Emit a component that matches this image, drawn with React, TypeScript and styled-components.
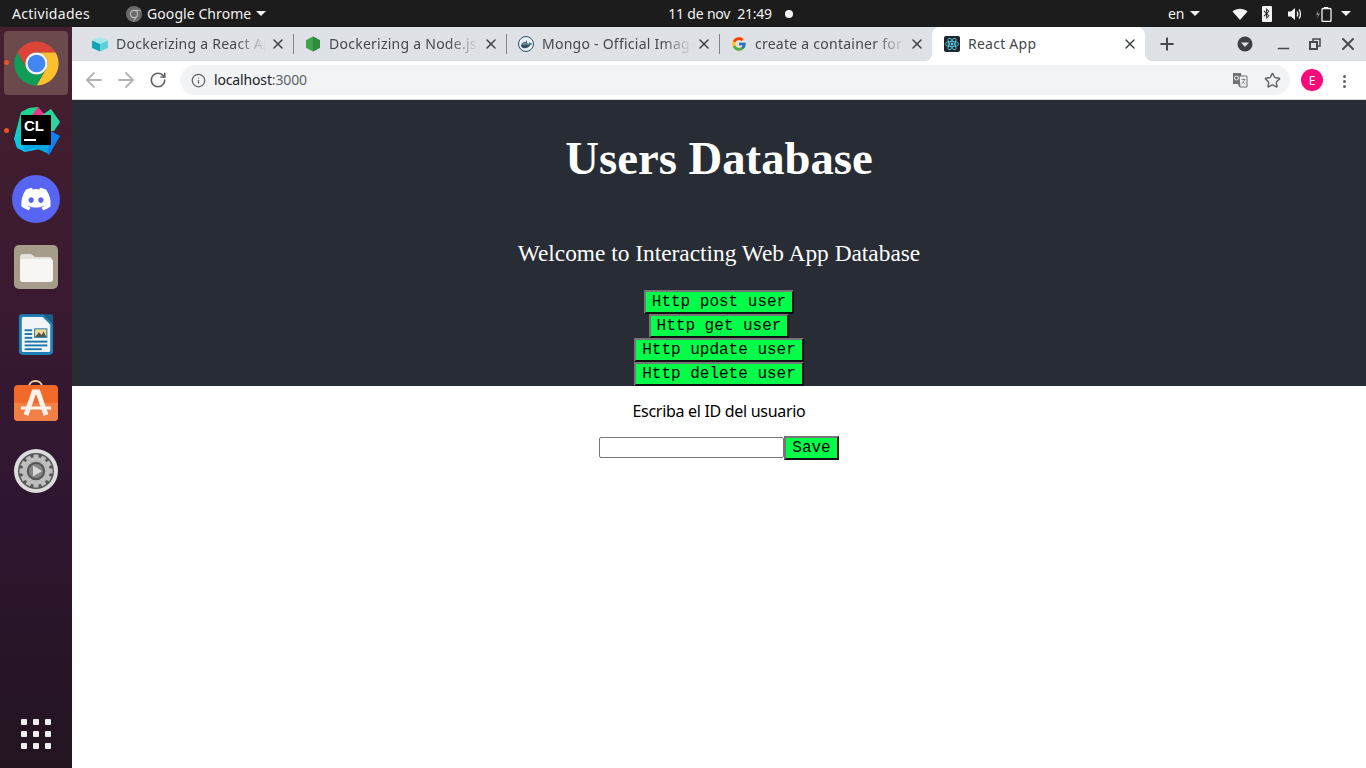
import React from 'react';
import styled, { createGlobalStyle } from 'styled-components';
import { FaDiscord, FaDocker, FaBluetoothB } from 'react-icons/fa';
import { FcGoogle } from 'react-icons/fc';
import { ArrowLeft, ArrowRight, RotateCw, Info, Star, Plus, X, Minus } from 'lucide-react';

const UI = `"Noto Sans", "Open Sans", sans-serif`;

const Global = createGlobalStyle`
  html, body { margin: 0; padding: 0; width: 1366px; height: 768px; overflow: hidden; background: #fff; }
  * { box-sizing: border-box; }
  svg { flex-shrink: 0; }
`;

const Desktop = styled.div`
  width: 1366px; height: 768px; display: flex; flex-direction: column;
  font-family: ${UI};
`;

/* ---------- GNOME top bar ---------- */
const TopBar = styled.header`
  height: 27px; flex: none; background: #1c1c1c; color: #f2f2f2;
  display: flex; align-items: center; font-size: 14px; padding-left: 12px; white-space: nowrap;
`;
const BarText = styled.span<{ $left?: number; $spacing?: number }>`
  margin-left: ${p => p.$left ?? 0}px; letter-spacing: ${p => p.$spacing ?? 0.3}px; line-height: 27px;
`;
const BarSlot = styled.span<{ $left: number; $width?: number }>`
  margin-left: ${p => p.$left}px; display: inline-flex; align-items: center; justify-content: center;
  width: ${p => p.$width ?? 16}px; height: 16px;
`;
const Caret = styled.span<{ $left: number }>`
  margin-left: ${p => p.$left}px; width: 0; height: 0;
  border-left: 5px solid transparent; border-right: 5px solid transparent; border-top: 5px solid #f2f2f2;
`;
const ClockDot = styled.span<{ $left: number }>`
  margin-left: ${p => p.$left}px; width: 8px; height: 8px; border-radius: 50%; background: #f2f2f2;
`;

/* ---------- Layout ---------- */
const Body = styled.div`
  flex: 1; display: flex; min-height: 0;
`;
const Dock = styled.nav`
  width: 72px; flex: none; display: flex; flex-direction: column; align-items: center;
  padding-top: 2px; padding-bottom: 19px;
  background: linear-gradient(180deg, #45202e 0%, #3a1a30 35%, #2e1630 65%, #231420 100%);
`;
const DockItem = styled.div<{ $active?: boolean }>`
  position: relative; width: 64px; height: 64px; margin: 2px 0; flex: none; border-radius: 4px;
  display: flex; align-items: center; justify-content: center;
  background: ${p => (p.$active ? '#6b4a4e' : 'transparent')};
`;
const RunDot = styled.span`
  position: absolute; left: 0; top: 29px; width: 5px; height: 5px; border-radius: 50%; background: #e95420;
`;
const AppGrid = styled.div`
  margin-top: auto; display: grid; grid-template-columns: repeat(3, 6px); gap: 6px;
`;
const AppDot = styled.span`
  width: 6px; height: 6px; border-radius: 1px; background: #eeeeee;
`;
const Discord = styled.div`
  width: 48px; height: 48px; border-radius: 50%; background: #5865f2; color: #fff;
  display: flex; align-items: center; justify-content: center;
`;

/* ---------- Browser ---------- */
const Browser = styled.main`
  flex: 1; min-width: 0; display: flex; flex-direction: column;
`;
const TabStrip = styled.div`
  height: 34px; flex: none; background: #dee1e6; display: flex; padding-left: 8px; align-items: stretch;
`;
const Tab = styled.div<{ $divider?: boolean }>`
  position: relative; width: 213px; flex: none; display: flex; align-items: center; padding: 0 0 0 12px;
  color: #45484d; font-size: 14px;
  &::after {
    content: ''; display: ${p => (p.$divider ? 'block' : 'none')};
    position: absolute; right: -1px; top: 7px; width: 1px; height: 20px; background: #81868a;
  }
`;
const ActiveTab = styled(Tab)`
  background: #fff; border-radius: 8px 8px 0 0;
  &::before, &::after {
    content: ''; display: block; position: absolute; top: auto; bottom: 0; width: 8px; height: 8px; background: none;
  }
  &::before { left: -8px; background: radial-gradient(circle at 0 0, transparent 8px, #fff 8.5px); }
  &::after { right: -8px; background: radial-gradient(circle at 100% 0, transparent 8px, #fff 8.5px); }
`;
const Favicon = styled.span<{ $push?: boolean }>`
  width: 16px; height: 16px; flex: none; display: flex; align-items: center; justify-content: center;
  margin-left: ${p => (p.$push ? 'auto' : '0')};
`;
const TabTitle = styled.span<{ $fade?: boolean }>`
  margin-left: 8px; width: 150px; overflow: hidden; white-space: nowrap; line-height: 20px; margin-top: -1px;
  letter-spacing: 0.25px;
  ${p => (p.$fade ? 'mask-image: linear-gradient(90deg, #000 80%, transparent 100%);' : '')}
`;
const TabClose = styled.span`
  margin-left: 4px; width: 16px; height: 16px; flex: none; display: flex; align-items: center; justify-content: center; color: #3c4043;
`;
const StripIcon = styled.span<{ $left: number; $drop?: number }>`
  margin-left: ${p => p.$left}px; margin-top: ${p => (p.$drop ?? 0) * 2}px;
  width: 16px; height: 16px; flex: none; display: flex; align-items: center; justify-content: center; color: #45484d;
  align-self: center;
`;
const MongoFav = styled.span`
  width: 16px; height: 16px; border-radius: 50%; border: 1.5px solid #2b5468; background: #e8eef1; color: #2b5468;
  display: flex; align-items: center; justify-content: center;
`;
const Toolbar = styled.div`
  height: 38px; flex: none; background: #fff; display: flex; align-items: flex-start; padding: 4px 0 0 14px;
`;
const NavButton = styled.span<{ $color: string; $left?: number }>`
  margin-left: ${p => p.$left ?? 0}px; width: 16px; height: 30px; flex: none; display: flex; align-items: center; justify-content: center;
  color: ${p => p.$color};
`;
const UrlPill = styled.div`
  margin-left: 14px; width: 1110px; height: 30px; border-radius: 15px; background: #f1f3f4;
  display: flex; align-items: center; padding-left: 11px; padding-right: 10px; font-size: 14px; color: #202124;
`;
const Host = styled.span`
  margin-left: 8px; line-height: 20px; margin-top: -1px; letter-spacing: -0.15px;
`;
const Port = styled.span`
  color: #5f6368;
`;
const Avatar = styled.span`
  margin-left: 11px; width: 22px; height: 22px; margin-top: 4px; border-radius: 50%; background: #fb0a7a; color: #fff; flex: none;
  display: flex; align-items: center; justify-content: center; font-size: 12px;
`;
const Kebab = styled.span`
  margin-left: 20px; margin-top: 10px; display: flex; flex-direction: column; gap: 2px; flex: none;
`;
const KebabDot = styled.span`
  width: 3px; height: 3px; border-radius: 50%; background: #5f6368;
`;
const Divider = styled.div`
  height: 1px; flex: none; background: #d5d7da;
`;

/* ---------- The React page ---------- */
const Page = styled.div`
  flex: 1; background: #fff; display: flex; flex-direction: column; align-items: center;
`;
const Hero = styled.section`
  width: 100%; height: 286px; flex: none; background: #282c34; color: #fff;
  display: flex; flex-direction: column; align-items: center; overflow: hidden;
  font-family: "Liberation Serif", "Times New Roman", serif;
`;
const Title = styled.h1`
  margin: 31px 0 0; font-size: 46.72px; line-height: 55px; font-weight: 700;
`;
const Welcome = styled.p`
  margin: 53px 0 0; font-size: 23.36px; line-height: 28px; font-weight: 400;
`;
const Actions = styled.div`
  margin-top: 23px; display: flex; flex-direction: column; align-items: center;
`;
const ActionButton = styled.button`
  height: 24px; padding: 0 6px; margin: 0; border-width: 2px; border-style: solid;
  border-color: #767676 #111 #111 #767676; background: #00ff48; color: #000;
  font-family: "Liberation Mono", "Courier New", monospace; font-size: 16px; line-height: 18px;
`;
const Prompt = styled.p`
  margin: 15px 0 0; font-size: 16px; line-height: 20px; color: #000; font-family: ${UI};
  letter-spacing: -0.3px;
`;
const Form = styled.div`
  margin-top: 15px; display: flex; align-items: flex-start; height: 24px;
`;
const IdInput = styled.input`
  width: 185px; height: 21px; margin-top: 1px; padding: 1px 2px; border: 1px solid #767676; border-radius: 2px; background: #fff; outline: none;
`;

/* ---------- Drawn icons ---------- */
const ChromeLogo = ({ size }: { size: number }) => (
  <svg width={size} height={size} viewBox="0 0 48 48">
    <path d="M6.68 14A20 20 0 0 1 41.32 14H24A10 10 0 0 0 15.34 29Z" fill="#db4437" />
    <path d="M41.32 14A20 20 0 0 1 24 44L32.66 29A10 10 0 0 0 24 14Z" fill="#fbc02d" />
    <path d="M24 44A20 20 0 0 1 6.68 14L15.34 29A10 10 0 0 0 32.66 29Z" fill="#0f9d58" />
    <circle cx="24" cy="24" r="10" fill="#f5f5f5" />
    <circle cx="24" cy="24" r="8" fill="#4285f4" />
  </svg>
);
const CLionLogo = () => (
  <svg width="50" height="50" viewBox="0 0 50 50">
    <defs>
      <linearGradient id="clLeft" x1="0" y1="0" x2="0" y2="1">
        <stop offset="0" stopColor="#21d789" />
        <stop offset="1" stopColor="#07c3f2" />
      </linearGradient>
    </defs>
    <path d="M3 33L10 6 18 2 27 1 33 10V42L14 46 6 42Z" fill="url(#clLeft)" />
    <path d="M21 9L27 1 34 9Z" fill="#ed358c" />
    <path d="M31 9L40 3 49 16 43 25 38 25Z" fill="#2bd6a0" />
    <path d="M38 24L49 30 38 49 30 42 38 36Z" fill="#0a84f0" />
    <path d="M12 39H38L36 47 24 42 14 45Z" fill="#0aa6e6" />
    <rect x="10" y="9" width="30" height="30" fill="#000" />
    <text x="13" y="25" fill="#fff" fontFamily="Liberation Sans, sans-serif" fontWeight="700" fontSize="15">CL</text>
    <rect x="13" y="33" width="12" height="2" fill="#fff" />
  </svg>
);
const FilesIcon = () => (
  <svg width="46" height="46" viewBox="0 0 46 46">
    <rect x="1" y="1" width="44" height="44" rx="5" fill="#a59d8a" />
    <path d="M7 13a3 3 0 0 1 3-3h8l4 3h14a3 3 0 0 1 3 3v19a3 3 0 0 1-3 3H10a3 3 0 0 1-3-3Z" fill="#e4e1da" />
    <path d="M7 17a2 2 0 0 1 2-2h28a3 3 0 0 1 3 3v17a3 3 0 0 1-3 3H10a3 3 0 0 1-3-3Z" fill="#f7f6f3" />
  </svg>
);
const WriterIcon = () => (
  <svg width="36" height="44" viewBox="0 0 38 46">
    <path d="M4 1H27L37 11V40a4 4 0 0 1-4 4H5a4 4 0 0 1-4-4V4a3 3 0 0 1 3-3Z" fill="#1e80b6" />
    <path d="M5 4H26L34 12V39a2 2 0 0 1-2 2H6a2 2 0 0 1-2-2V5Z" fill="#f2f5f7" />
    <path d="M27 1H35a2 2 0 0 1 2 2V11Z" fill="#16608c" />
    <g fill="#1a77aa">
      <rect x="7" y="17" width="8" height="2" /><rect x="7" y="21" width="8" height="2" /><rect x="7" y="25" width="8" height="2" />
      <rect x="7" y="29" width="24" height="2" /><rect x="7" y="33" width="24" height="2" /><rect x="7" y="37" width="18" height="2" />
    </g>
    <rect x="17" y="16" width="14" height="10" fill="#1a77aa" />
    <rect x="18" y="17" width="12" height="8" fill="#f4d98e" />
    <path d="M18 25L22 20 25 23 27 19 30 25Z" fill="#555" />
  </svg>
);
const StoreIcon = () => (
  <svg width="46" height="46" viewBox="0 0 46 46">
    <path d="M16 7C16 -1 29 -1 29 7" fill="none" stroke="#f0d0a8" strokeWidth="2" />
    <rect x="1" y="5" width="44" height="36" rx="4" fill="#f26a2a" />
    <path d="M1 23H45V37a4 4 0 0 1-4 4H5a4 4 0 0 1-4-4Z" fill="#f08048" />
    <path d="M13 35L21 12H25L33 35" fill="none" stroke="#fff3ea" strokeWidth="5" />
    <path d="M8 28H38" stroke="#fff3ea" strokeWidth="3" />
  </svg>
);
const SettingsIcon = () => {
  const teeth = Array.from({ length: 12 }, (_, i) => i * 30);
  return (
    <svg width="46" height="46" viewBox="0 0 46 46">
      <circle cx="23" cy="23" r="22" fill="#dcdcdc" />
      <circle cx="23" cy="23" r="18" fill="#565656" />
      {teeth.map(a => (
        <rect key={a} x="20.500" y="6.500" width="5" height="6" fill="#bdbdbd" transform={`rotate(${a} 23 23)`} />
      ))}
      <circle cx="23" cy="23" r="11.500" fill="none" stroke="#bdbdbd" strokeWidth="4.500" />
      <circle cx="23" cy="23" r="7" fill="#858585" />
      <path d="M20 17.500L29 23 20 28.500Z" fill="#d8d8d8" />
    </svg>
  );
};
const CubeIcon = () => (
  <svg width="16" height="16" viewBox="0 0 16 16">
    <path d="M8 1L16 4.500 8 8 0 4.500Z" fill="#a5e6ec" />
    <path d="M0 4.500L8 8V15.500L0 12Z" fill="#11a5b3" />
    <path d="M16 4.500L8 8V15.500L16 12Z" fill="#5fd0da" />
  </svg>
);
const NodeIcon = () => (
  <svg width="16" height="16" viewBox="0 0 16 16">
    <path d="M8 0.500L15 4.300V11.700L8 15.500 1 11.700V4.300Z" fill="#3fa14a" />
    <path d="M8 0.500L15 4.300V11.700L8 15.500Z" fill="#2f8a3c" />
  </svg>
);
const ReactFav = () => (
  <svg width="16" height="16" viewBox="0 0 16 16">
    <rect width="16" height="16" rx="2" fill="#20232a" />
    <g fill="none" stroke="#61dafb" strokeWidth="0.800">
      <ellipse cx="8" cy="8" rx="6.500" ry="2.600" />
      <ellipse cx="8" cy="8" rx="6.500" ry="2.600" transform="rotate(60 8 8)" />
      <ellipse cx="8" cy="8" rx="6.500" ry="2.600" transform="rotate(120 8 8)" />
    </g>
    <circle cx="8" cy="8" r="1.300" fill="#61dafb" />
  </svg>
);
const GreyChrome = () => (
  <svg width="16" height="16" viewBox="0 0 16 16">
    <circle cx="8" cy="8" r="8" fill="#6a6a6a" />
    <circle cx="8" cy="8" r="3.600" fill="none" stroke="#bdbdbd" strokeWidth="1.200" />
    <path d="M8 4.400H15M11 10L7.500 15.500" stroke="#bdbdbd" strokeWidth="1" fill="none" />
  </svg>
);
const WifiIcon = () => (
  <svg width="16" height="14" viewBox="0 0 16 14">
    <path d="M0.500 4.500C4.500 0.700 11.500 0.700 15.500 4.500L8 13Z" fill="#f2f2f2" />
  </svg>
);
const BluetoothTile = styled.span`
  width: 10px; height: 16px; background: #f2f2f2; border-radius: 1px; color: #1c1c1c;
  display: flex; align-items: center; justify-content: center;
`;
const VolumeIcon = () => (
  <svg width="16" height="14" viewBox="0 0 16 14">
    <path d="M1 4.500H4L8 1V13L4 9.500H1Z" fill="#f2f2f2" />
    <path d="M10 4.500C11 6 11 8 10 9.500M12 2.500C14 5 14 9 12 11.500" fill="none" stroke="#f2f2f2" strokeWidth="1.300" />
  </svg>
);
const BatteryIcon = () => (
  <svg width="18" height="16" viewBox="0 0 18 16">
    <path d="M3.500 4L1 9H3L2 13 5 7.500H3Z" fill="#8a8a8a" />
    <path d="M9 2.500V1H13V2.500" fill="#f2f2f2" />
    <rect x="7" y="2.500" width="9" height="13" rx="1" fill="none" stroke="#f2f2f2" strokeWidth="1.300" />
  </svg>
);
const TranslateIcon = () => (
  <svg width="16" height="16" viewBox="0 0 16 16">
    <path d="M1 1H9L11 15H7L6 12H1Z" fill="#6f7276" />
    <path d="M7 4H15V15H8Z" fill="#f1f3f4" stroke="#6f7276" strokeWidth="1" />
    <circle cx="4.500" cy="6" r="2" fill="none" stroke="#f1f3f4" strokeWidth="1" />
    <path d="M9.500 7.500H13.500M11.500 6.500V7.500M12.500 7.500C12 10 11 11 9.500 12M10.500 9.500C11 10.500 12 11.500 13.500 12" stroke="#6f7276" strokeWidth="0.800" fill="none" />
  </svg>
);
const ProfileMenuIcon = () => (
  <svg width="16" height="16" viewBox="0 0 16 16">
    <circle cx="8" cy="8" r="7.500" fill="#3c4043" />
    <path d="M4 6.500H12L8 11Z" fill="#dee1e6" />
  </svg>
);
const RestoreIcon = () => (
  <svg width="12" height="12" viewBox="0 0 12 12" fill="none" stroke="#45484d" strokeWidth="1.500">
    <rect x="1" y="4" width="7" height="7" fill="#dee1e6" strokeWidth="2" />
    <path d="M4 3V1H11V8H9" />
  </svg>
);

const tabs = [
  { title: 'Dockerizing a React App', icon: <CubeIcon /> },
  { title: 'Dockerizing a Node.js web app', icon: <NodeIcon /> },
  { title: 'Mongo - Official Image', icon: <MongoFav><FaDocker size={11} /></MongoFav> },
  { title: 'create a container for', icon: <FcGoogle size={16} /> },
];
const actions = ['Http post user', 'Http get user', 'Http update user', 'Http delete user'];

export default function App() {
  return (
    <Desktop>
      <Global />
      <TopBar>
        <BarText>Actividades</BarText>
        <BarSlot $left={36}><GreyChrome /></BarSlot>
        <BarText $left={5} $spacing={0.07}>Google Chrome</BarText>
        <Caret $left={5} />
        <BarText $left={402} $spacing={-0.2}>11 de nov&nbsp;&nbsp;21:49</BarText>
        <ClockDot $left={13} />
        <BarText $left={375} $spacing={0}>en</BarText>
        <Caret $left={5} />
        <BarSlot $left={32}><WifiIcon /></BarSlot>
        <BarSlot $left={11}><BluetoothTile><FaBluetoothB size={11} /></BluetoothTile></BarSlot>
        <BarSlot $left={12}><VolumeIcon /></BarSlot>
        <BarSlot $left={12} $width={18}><BatteryIcon /></BarSlot>
        <Caret $left={8} />
      </TopBar>
      <Body>
        <Dock>
          <DockItem $active><RunDot /><ChromeLogo size={53} /></DockItem>
          <DockItem><RunDot /><CLionLogo /></DockItem>
          <DockItem><Discord><FaDiscord size={32} /></Discord></DockItem>
          <DockItem><FilesIcon /></DockItem>
          <DockItem><WriterIcon /></DockItem>
          <DockItem><StoreIcon /></DockItem>
          <DockItem><SettingsIcon /></DockItem>
          <AppGrid>
            {Array.from({ length: 9 }, (_, i) => <AppDot key={i} />)}
          </AppGrid>
        </Dock>
        <Browser>
          <TabStrip>
            {tabs.map((t, i) => (
              <Tab key={t.title} $divider={i < 3}>
                <Favicon>{t.icon}</Favicon>
                <TabTitle $fade>{t.title}</TabTitle>
                <TabClose><X size={16} strokeWidth={2.2} /></TabClose>
              </Tab>
            ))}
            <ActiveTab>
              <Favicon><ReactFav /></Favicon>
              <TabTitle>React App</TabTitle>
              <TabClose><X size={16} strokeWidth={2.2} /></TabClose>
            </ActiveTab>
            <StripIcon $left={14}><Plus size={20} strokeWidth={2.4} /></StripIcon>
            <StripIcon $left={62}><ProfileMenuIcon /></StripIcon>
            <StripIcon $left={22} $drop={4}><Minus size={17} strokeWidth={2.4} /></StripIcon>
            <StripIcon $left={16}><RestoreIcon /></StripIcon>
            <StripIcon $left={17}><X size={20} strokeWidth={2.4} /></StripIcon>
          </TabStrip>
          <Toolbar>
            <NavButton $color="#b1b3b6"><ArrowLeft size={24} strokeWidth={1.8} /></NavButton>
            <NavButton $color="#b1b3b6" $left={16}><ArrowRight size={24} strokeWidth={1.8} /></NavButton>
            <NavButton $color="#5f6368" $left={16}><RotateCw size={18} strokeWidth={2.2} /></NavButton>
            <UrlPill>
              <Info size={15} color="#5f6368" strokeWidth={2} />
              <Host>localhost<Port>:3000</Port></Host>
              <Favicon $push><TranslateIcon /></Favicon>
              <NavButton $color="#5f6368" $left={16}><Star size={17} strokeWidth={2} /></NavButton>
            </UrlPill>
            <Avatar>E</Avatar>
            <Kebab><KebabDot /><KebabDot /><KebabDot /></Kebab>
          </Toolbar>
          <Divider />
          <Page>
            <Hero>
              <Title>Users Database</Title>
              <Welcome>Welcome to Interacting Web App Database</Welcome>
              <Actions>
                {actions.map(a => <ActionButton key={a}>{a}</ActionButton>)}
              </Actions>
            </Hero>
            <Prompt>Escriba el ID del usuario</Prompt>
            <Form>
              <IdInput />
              <ActionButton>Save</ActionButton>
            </Form>
          </Page>
        </Browser>
      </Body>
    </Desktop>
  );
}
